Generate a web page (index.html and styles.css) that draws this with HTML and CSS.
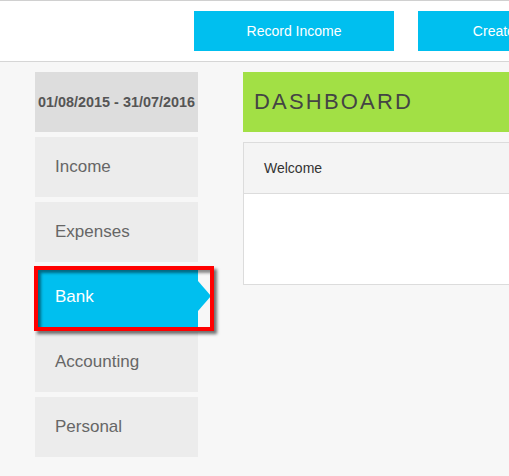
FILE: index.html
```html
<!DOCTYPE html>
<html>
<head>
<meta charset="utf-8">
<link rel="stylesheet" href="styles.css">
</head>
<body>
<header class="topbar">
  <a class="btn">Record Income</a>
  <a class="btn">Create Invoice</a>
</header>
<div class="main">
  <nav class="sidebar">
    <div class="period">01/08/2015 - 31/07/2016</div>
    <div class="item">Income</div>
    <div class="item">Expenses</div>
    <div class="item active">Bank<span class="highlight"></span></div>
    <div class="item">Accounting</div>
    <div class="item">Personal</div>
  </nav>
  <section class="content">
    <div class="title">DASHBOARD</div>
    <div class="panel">
      <div class="panel-head">Welcome</div>
      <div class="panel-body"></div>
    </div>
  </section>
</div>
</body>
</html>
```
FILE: styles.css
```css
html, body {
  margin: 0;
  padding: 0;
  overflow: hidden;
}
body {
  background: #f7f7f7;
  font-family: "Liberation Sans", Arial, sans-serif;
  width: 509px;
  height: 476px;
}
.topbar {
  background: #fff;
  border-top: 1px solid #d0d0d0;
  border-bottom: 1px solid #d6d6d6;
  height: 60px;
  box-sizing: content-box;
  display: flex;
  gap: 24px;
  padding-left: 194px;
  align-items: center;
  white-space: nowrap;
}
.btn {
  flex: none;
  width: 200px;
  height: 40px;
  background: #00bfef;
  color: #fff;
  font-size: 14px;
  display: flex;
  align-items: center;
  justify-content: center;
}
.main {
  display: flex;
  gap: 45px;
  padding: 10px 0 0 35px;
  width: 800px;
}
.sidebar {
  width: 163px;
  flex: none;
  display: flex;
  flex-direction: column;
  gap: 5px;
}
.period {
  height: 60px;
  background: #dddddd;
  color: #555;
  font-weight: bold;
  font-size: 14.4px;
  display: flex;
  align-items: center;
  justify-content: center;
  white-space: nowrap;
}
.item {
  height: 60px;
  background: #ececec;
  color: #666;
  font-size: 17px;
  display: flex;
  align-items: center;
  padding-left: 20px;
  position: relative;
}
.item.active {
  background: #00bfef;
  color: #fff;
}
.item.active::after {
  content: "";
  position: absolute;
  right: -13px;
  top: 14px;
  border-left: 13px solid #00bfef;
  border-top: 15px solid transparent;
  border-bottom: 15px solid transparent;
}
.highlight {
  position: absolute;
  left: -1px;
  top: -1px;
  right: -16px;
  bottom: -4px;
  border: 4px solid #ff0000;
  box-shadow: 3px 3px 3px rgba(0,0,0,0.55), inset 3px 3px 3px rgba(0,0,0,0.45);
  z-index: 2;
}
.content {
  flex: 1;
  display: flex;
  flex-direction: column;
  gap: 10px;
}
.title {
  height: 60px;
  background: #a2e045;
  color: #444;
  font-size: 22px;
  letter-spacing: 2.2px;
  display: flex;
  align-items: center;
  padding-left: 11px;
}
.panel {
  border: 1px solid #dcdcdc;
  background: #fff;
}
.panel-head {
  height: 50px;
  background: #f4f4f4;
  border-bottom: 1px solid #dcdcdc;
  font-size: 14px;
  color: #333;
  display: flex;
  align-items: center;
  padding-left: 20px;
}
.panel-body {
  height: 90px;
}
```
